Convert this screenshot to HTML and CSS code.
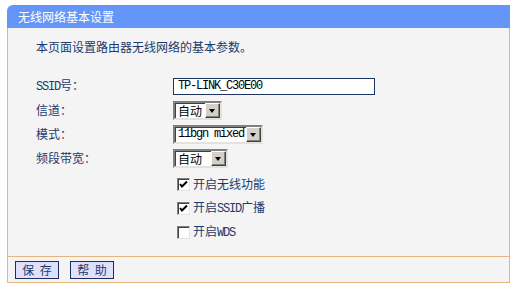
FILE: index.html
```html
<!DOCTYPE html>
<html lang="zh-CN">
<head>
  <meta charset="UTF-8" />
  <title>无线网络基本设置</title>
  <link rel="stylesheet" href="styles.css">
</head>
<body>
  <div class="panel">
    <div class="title">无线网络基本设置</div>

    <div class="content">
      <p class="intro">本页面设置路由器无线网络的基本参数。</p>

      <div class="form">
        <div class="row">
          <span class="label"><span class="en">SSID</span>号：</span>
          <span class="textbox en">TP-LINK_C30E00</span>
        </div>
        <div class="row">
          <span class="label">信道：</span>
          <span class="select sel-channel"><span class="value">自动</span><span class="arrow"></span></span>
        </div>
        <div class="row">
          <span class="label">模式：</span>
          <span class="select sel-mode"><span class="value en">11bgn mixed</span><span class="arrow"></span></span>
        </div>
        <div class="row">
          <span class="label">频段带宽：</span>
          <span class="select sel-width"><span class="value">自动</span><span class="arrow"></span></span>
        </div>
      </div>

      <div class="checks">
        <div class="check-row">
          <span class="box"><svg width="11" height="11" viewBox="0 0 11 11"><polyline points="2,5 4,7.5 9,2.5" fill="none" stroke="#000" stroke-width="2"/></svg></span>
          <span class="check-text">开启无线功能</span>
        </div>
        <div class="check-row">
          <span class="box"><svg width="11" height="11" viewBox="0 0 11 11"><polyline points="2,5 4,7.5 9,2.5" fill="none" stroke="#000" stroke-width="2"/></svg></span>
          <span class="check-text">开启<span class="en">SSID</span>广播</span>
        </div>
        <div class="check-row">
          <span class="box"></span>
          <span class="check-text">开启<span class="en">WDS</span></span>
        </div>
      </div>
    </div>

    <div class="footer">
      <button class="btn">保 存</button>
      <button class="btn">帮 助</button>
    </div>
  </div>
</body>
</html>
```

FILE: styles.css
```css
body {
  margin: 0;
  background: #fff;
  font-family: "Noto Sans CJK SC", sans-serif;
  font-size: 12px;
  color: #1c3a6c;
}
.en {
  font-family: "Liberation Mono", monospace;
  letter-spacing: -1.2px;
}
.panel {
  width: 503px;
  margin: 5px 0 0 7px;
}
.title {
  height: 23px;
  line-height: 23px;
  background: #6496fa;
  color: #fff;
  padding-left: 11px;
  border-radius: 6px 0 0 0;
}
.content {
  background: #f4f4f4;
  border-left: 1px solid #e6b47c;
  border-right: 1px solid #e6b47c;
  padding: 10px 0 12px 28px;
}
.intro {
  margin: 0;
  height: 18px;
  line-height: 18px;
}
.form {
  margin-top: 18px;
}
.row {
  display: flex;
  align-items: center;
  height: 24px;
}
.label {
  width: 137px;
  line-height: 16px;
}
.textbox {
  box-sizing: border-box;
  width: 202px;
  height: 17px;
  line-height: 15px;
  padding-left: 4px;
  background: #fff;
  border: 1px solid #1c3560;
  color: #000;
}
.select {
  display: flex;
  height: 15px;
  background: #fff;
  border: 2px solid;
  border-color: #808080 #e4e2dc #e4e2dc #808080;
  box-shadow: inset 1px 1px #404040;
  color: #000;
}
.select .value {
  flex: 1;
  padding-left: 3px;
  line-height: 15px;
  white-space: nowrap;
}
.sel-channel { width: 45px; }
.sel-mode { width: 86px; }
.sel-width { width: 51px; }
.arrow {
  position: relative;
  box-sizing: border-box;
  width: 15px;
  height: 15px;
  background: #d4d0c8;
  border: 1px solid;
  border-color: #fff #404040 #404040 #fff;
  box-shadow: inset -1px -1px #808080;
}
.arrow::after {
  content: "";
  position: absolute;
  left: 3px;
  top: 5px;
  border-left: 3.5px solid transparent;
  border-right: 3.5px solid transparent;
  border-top: 4px solid #000;
}
.checks {
  margin-top: 2px;
  padding-left: 141px;
}
.check-row {
  display: flex;
  align-items: center;
  height: 24px;
}
.check-text {
  line-height: 16px;
}
.box {
  box-sizing: border-box;
  width: 13px;
  height: 13px;
  margin-right: 3px;
  background: #fff;
  border: 1px solid;
  border-color: #808080 #e4e2dc #e4e2dc #808080;
  box-shadow: inset 1px 1px #404040;
  display: flex;
  align-items: center;
  justify-content: center;
}
.box svg {
  display: block;
}
.footer {
  height: 25px;
  background: #f4f4f4;
  border: 1px solid #e6b47c;
  padding-left: 7px;
  display: flex;
  align-items: center;
  gap: 11px;
}
.btn {
  width: 44px;
  height: 18px;
  padding: 0;
  background: #dfe0fc;
  border: 1px solid #1c2f5c;
  font-family: "Noto Sans CJK SC", sans-serif;
  font-size: 12px;
  line-height: 16px;
  color: #1c3a6c;
  word-spacing: 3px;
}
```
